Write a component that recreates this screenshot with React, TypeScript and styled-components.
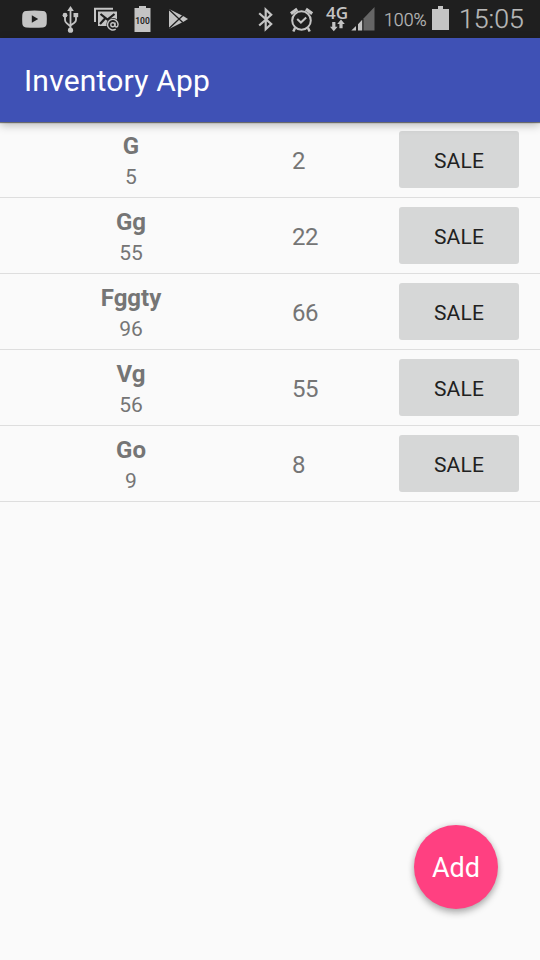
import React from "react";
import styled, { createGlobalStyle } from "styled-components";

const GlobalStyle = createGlobalStyle`
  * { box-sizing: border-box; }
  html, body { margin: 0; padding: 0; background: #fafafa; }
  body { font-family: Roboto, "Liberation Sans", sans-serif; }
`;

const Screen = styled.div`
  display: flex;
  flex-direction: column;
  width: 540px;
  height: 960px;
  overflow: hidden;
  background: #fafafa;
`;

const StatusBar = styled.div`
  display: flex;
  flex: none;
  height: 38px;
  padding: 0 15px 0 22px;
  background: #1f1f1f;
  color: #b9b9b9;
`;

const StatusGroup = styled.div<{ $end?: boolean }>`
  display: flex;
  height: 38px;
  margin-left: ${(p) => (p.$end ? "auto" : "0")};
`;

const Glyph = styled.svg<{ $gap: number }>`
  display: block;
  flex: none;
  height: 38px;
  margin-left: ${(p) => p.$gap}px;
  font-family: Roboto, sans-serif;
  font-weight: 700;
`;

const Network = styled.div`
  display: flex;
  flex-direction: column;
  align-items: center;
  width: 22px;
  margin-left: 12px;
  padding-top: 4px;
`;

const NetworkLabel = styled.span`
  height: 15px;
  font: 600 17px/17px "Open Sans", sans-serif;
  color: #c4c4c4;
`;

const NetworkArrows = styled.svg`
  display: block;
  flex: none;
  width: 15px;
  height: 13px;
`;

const Percent = styled.span`
  width: 44px;
  margin-left: 9px;
  font-size: 17.8px;
  line-height: 40px;
  font-weight: 300;
  white-space: nowrap;
  -webkit-text-stroke: 0.25px #b9b9b9;
`;

const Clock = styled.span`
  width: 66px;
  margin-left: 9px;
  font-size: 26.7px;
  line-height: 38px;
  font-weight: 300;
  white-space: nowrap;
  -webkit-text-stroke: 0.25px #b9b9b9;
`;

const AppBar = styled.header`
  display: flex;
  flex: none;
  align-items: center;
  z-index: 1;
  height: 84px;
  padding: 0 24px;
  background: #3f51b5;
  box-shadow: 0 1px 1px rgba(0, 0, 0, 0.48), 0 3px 9px rgba(0, 0, 0, 0.27);
`;

const Title = styled.h1`
  margin: 0;
  padding-top: 1px;
  font-size: 30px;
  line-height: 36px;
  font-weight: 400;
  letter-spacing: 0.2px;
  color: #fff;
`;

const List = styled.main`
  flex: 1;
`;

const Row = styled.div`
  display: grid;
  grid-template-columns: 262px 107px 120px;
  column-gap: 15px;
  height: 76px;
  border-bottom: 1px solid #dedede;
  color: #757575;
`;

const Product = styled.div`
  display: flex;
  flex-direction: column;
  align-items: center;
  padding-top: 9px;
`;

const Name = styled.span`
  font-size: 24px;
  line-height: 30px;
  font-weight: 700;
`;

const Price = styled.span`
  font-size: 21px;
  line-height: 33px;
`;

const Quantity = styled.span`
  padding-left: 15px;
  font-size: 24px;
  letter-spacing: -0.4px;
  line-height: 79px;
`;

const SaleButton = styled.button`
  width: 120px;
  height: 57px;
  margin: 9px 0 0;
  padding: 2px 0 0;
  border: 0;
  border-radius: 3px;
  background: #d6d7d7;
  color: #212121;
  font-family: inherit;
  font-size: 21px;
  letter-spacing: 0.2px;
`;

const Fab = styled.button`
  align-self: flex-end;
  flex: none;
  width: 84px;
  height: 84px;
  margin: 0 42px 51px 0;
  padding: 1px 0 0;
  border: 0;
  border-radius: 50%;
  background: #ff4081;
  color: #fff;
  font-family: inherit;
  font-size: 27px;
  box-shadow: 0 4px 7px rgba(0, 0, 0, 0.27), 0 0 6px rgba(0, 0, 0, 0.12);
`;

const products = [
  { name: "G", price: 5, quantity: 2 },
  { name: "Gg", price: 55, quantity: 22 },
  { name: "Fggty", price: 96, quantity: 66 },
  { name: "Vg", price: 56, quantity: 55 },
  { name: "Go", price: 9, quantity: 8 },
];

const ink = "#c4c4c4";
const dark = "#1f1f1f";

const VideoIcon = () => (
  <Glyph $gap={0} width="25" viewBox="0 0 25 38">
    <path d="M4 10.9Q12.5 10.1 21 10.9Q24.5 11.2 24.7 15Q25 19 24.7 23.5Q24.5 27 21 27.4Q12.5 28.2 4 27.4Q.5 27 .3 23.5Q0 19 .3 15Q.5 11.2 4 10.9Z" fill={ink} />
    <path d="M9.8 15.3V22.8L16.2 19Z" fill={dark} />
  </Glyph>
);

const UsbIcon = () => (
  <Glyph $gap={15} width="17" viewBox="0 0 17 38">
    <g fill="none" stroke={ink} strokeWidth="1.8">
      <path d="M8.5 10V30M3 16V20Q3 22 5 23.4L8.5 26.5M14 15V20Q14 21.5 12 23L8.5 25.5" />
    </g>
    <path d="M8.5 6L11.8 11H5.2Z" fill={ink} />
    <circle cx="3" cy="15.2" r="2.4" fill={ink} />
    <path d="M11.5 13H16.2V17.2H11.5Z" fill={ink} />
    <circle cx="8.5" cy="30.2" r="2.6" fill={ink} />
  </Glyph>
);

const MailIcon = () => (
  <Glyph $gap={15} width="26" viewBox="0 0 26 38">
    <path d="M1 22V8.7H19" fill="none" stroke={ink} strokeWidth="2" />
    <path d="M4 11.5H23V26H4Z" fill={ink} />
    <path d="M6.5 14L13.5 19.5L20.5 14M6 24L11 18.5" fill="none" stroke={dark} strokeWidth="2.2" />
    <circle cx="19" cy="24.7" r="6.7" fill={dark} />
    <g fill="none" stroke={ink} strokeWidth="1.4">
      <circle cx="18.8" cy="24.8" r="2" />
      <path d="M21 22.4V25.7Q21 27 22.4 27Q24.1 26.5 24.1 24.2A5.3 5.3 0 1 0 21.7 29.1" />
    </g>
  </Glyph>
);

const BatteryLevelIcon = () => (
  <Glyph $gap={14} width="17" viewBox="0 0 17 38">
    <path d="M5 6H12V8H16.5V32H.5V8H5Z" fill={ink} />
    <text x="8.5" y="23.6" textAnchor="middle" fontSize="9.8" textLength="14.6" lengthAdjust="spacingAndGlyphs" fontWeight="600" fill={dark}>100</text>
  </Glyph>
);

const PlayStoreIcon = () => (
  <Glyph $gap={17} width="21" viewBox="0 0 21 38">
    <path d="M1 9L16 16.5L20 19L16 21.5L1 29Z" fill={ink} />
    <path d="M1 9.5L14.8 22.5M1 28.5L14.8 15.5" stroke={dark} strokeWidth="1.3" />
  </Glyph>
);

const BluetoothIcon = () => (
  <Glyph $gap={0} width="15" viewBox="0 0 15 38">
    <path d="M1.2 13.3L13.2 24L7.7 29.2V9.5L13.2 14.7L1.2 25.5" fill="none" stroke={ink} strokeWidth="2.2" />
  </Glyph>
);

const AlarmIcon = () => (
  <Glyph $gap={17} width="24" viewBox="0 0 24 38">
    <g fill="none" stroke={ink}>
      <circle cx="11.5" cy="20.5" r="9.3" strokeWidth="2" />
      <path d="M7.2 19L10.9 22.5L16.2 17.5" strokeWidth="2" />
      <path d="M.9 13.6L7.2 9.1M22.2 13.6L15.9 9.1" strokeWidth="3.2" />
      <path d="M5 28L3.3 31.5M18 28L19.7 31.5" strokeWidth="2.5" />
    </g>
  </Glyph>
);

const SignalIcon = () => (
  <Glyph $gap={3} width="24" viewBox="0 0 24 38">
    <path d="M12.5 18.5L23.5 7V30.5H12.5Z" fill="#666" />
    <path d="M.3 30.5L5 26V30.5ZM7 24.3L11.2 19.7V30.5H7Z" fill={ink} />
  </Glyph>
);

const BatteryIcon = () => (
  <Glyph $gap={4} width="18" viewBox="0 0 18 38">
    <path d="M6 6H11V9H17V30H0V9H6Z" fill={ink} />
  </Glyph>
);

export default function App() {
  return (
    <Screen>
      <GlobalStyle />
      <StatusBar>
        <StatusGroup>
          <VideoIcon />
          <UsbIcon />
          <MailIcon />
          <BatteryLevelIcon />
          <PlayStoreIcon />
        </StatusGroup>
        <StatusGroup $end>
          <BluetoothIcon />
          <AlarmIcon />
          <Network>
            <NetworkLabel>4G</NetworkLabel>
            <NetworkArrows viewBox="0 0 15 13">
              <path d="M2.2 3H5.4V7.7H7.6L3.8 12.3L0 7.7H2.2ZM9.4 9.3V5H7.2L11 .4L14.8 5H12.6V9.3Z" fill={ink} />
            </NetworkArrows>
          </Network>
          <SignalIcon />
          <Percent>100%</Percent>
          <BatteryIcon />
          <Clock>15:05</Clock>
        </StatusGroup>
      </StatusBar>
      <AppBar>
        <Title>Inventory App</Title>
      </AppBar>
      <List>
        {products.map((product) => (
          <Row key={product.name}>
            <Product>
              <Name>{product.name}</Name>
              <Price>{product.price}</Price>
            </Product>
            <Quantity>{product.quantity}</Quantity>
            <SaleButton>SALE</SaleButton>
          </Row>
        ))}
      </List>
      <Fab>Add</Fab>
    </Screen>
  );
}
